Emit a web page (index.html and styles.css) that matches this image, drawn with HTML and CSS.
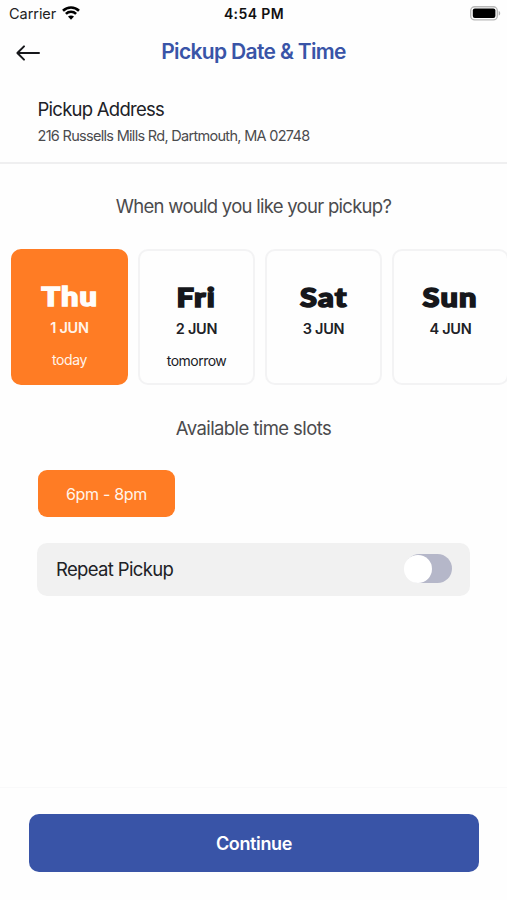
FILE: index.html
```html
<!DOCTYPE html>
<html lang="en">
<head>
<meta charset="utf-8">
<title>Pickup Date &amp; Time</title>
<link rel="stylesheet" href="styles.css">
</head>
<body>
<div class="screen">
  <header class="status">
    <div class="status-left"><span class="carrier">Carrier</span>
      <svg class="wifi" width="18" height="14" viewBox="0 0 18 14" fill="none" stroke="#000" stroke-width="2.6"><path d="M1 4.7C5.5.4 12.5.4 17 4.7M3.9 7.9c2.9-2.8 7.3-2.8 10.2 0"/><path d="M6 10.5c1.7-1.5 4.3-1.5 6 0l-3 3.2z" fill="#000" stroke="none"/></svg>
    </div>
    <span class="clock">4:54 PM</span>
    <svg class="battery" width="31" height="15" viewBox="0 0 31 15"><rect x=".7" y=".7" width="26.6" height="13.2" rx="4" fill="#fff" stroke="#b8b8b8" stroke-width="1.4"/><rect x="2.8" y="2.6" width="22.6" height="9.4" rx="2" fill="#000"/><path d="M28.7 5v4.6c2-.6 2-4 0-4.6z" fill="#b0b0b0"/></svg>
  </header>
  <nav class="nav">
    <svg class="back" width="26" height="18" viewBox="0 0 26 18" fill="none" stroke="#16171b" stroke-width="2" stroke-linecap="round" stroke-linejoin="round"><path d="M24 9H2.8M9 2.4L2.4 9L9 15.6"/></svg>
    <h1 class="title">Pickup Date &amp; Time</h1>
  </nav>
  <section class="address">
    <h2 class="address-label">Pickup Address</h2>
    <p class="address-text">216 Russells Mills Rd, Dartmouth, MA 02748</p>
  </section>
  <main class="content">
    <p class="prompt">When would you like your pickup?</p>
    <div class="days">
      <div class="day selected"><span class="name">Thu</span><span class="date">1 JUN</span><span class="note">today</span></div>
      <div class="day"><span class="name">Fri</span><span class="date">2 JUN</span><span class="note">tomorrow</span></div>
      <div class="day"><span class="name">Sat</span><span class="date">3 JUN</span></div>
      <div class="day"><span class="name">Sun</span><span class="date">4 JUN</span></div>
    </div>
    <p class="prompt slots-title">Available time slots</p>
    <button class="slot">6pm - 8pm</button>
    <div class="repeat"><span class="repeat-label">Repeat Pickup</span><span class="toggle"><span class="knob"></span></span></div>
  </main>
  <footer class="footer"><button class="continue">Continue</button></footer>
</div>
</body>
</html>
```
FILE: styles.css
```css
* { box-sizing: border-box; margin: 0; padding: 0; }
body { background: #fefefe; font-family: Inter, "Liberation Sans", sans-serif; color: #202126; }
button { border: 0; font-family: inherit; }
.screen { width: 507px; height: 900px; overflow: hidden; display: flex; flex-direction: column; background: #fefefe; }
.status { height: 28px; display: grid; grid-template-columns: 1fr auto 1fr; align-items: center; padding: 0 6px 0 9px; }
.status-left { display: flex; align-items: center; gap: 6px; }
.carrier { font-size: 14.5px; letter-spacing: -.05px; color: #222; margin-top: -2px; }
.wifi { margin-top: -2px; }
.clock { font-size: 14px; font-weight: 600; letter-spacing: .4px; color: #111; margin: -2px 2px 0 0; }
.battery { justify-self: end; margin-top: -1px; }
.nav { height: 50px; display: grid; grid-template-columns: 1fr auto 1fr; align-items: center; padding: 0 15px; }
.title { font-size: 21px; line-height: 26px; font-weight: 600; letter-spacing: -.66px; color: #3954a7; margin-top: -3px; }
.address { height: 86px; padding: 19px 37.5px 0; border-bottom: 2px solid #efeff0; }
.address-label { font-size: 18.5px; line-height: 25px; font-weight: 400; letter-spacing: -.74px; }
.address-text { font-size: 14.5px; line-height: 20px; margin-top: 4px; letter-spacing: -.7px; color: #4b4b4e; }
.content { flex: 1; }
.prompt { font-size: 18.5px; line-height: 26px; padding-top: 29px; text-align: center; letter-spacing: -.72px; color: #4b4b4d; }
.days { display: flex; gap: 10px; margin-top: 30px; padding-left: 11px; }
.day { flex: 0 0 117px; height: 136px; border: 2px solid #f3f3f4; border-radius: 10px; background: #fefefe; display: flex; flex-direction: column; align-items: center; padding-top: 27px; }
.name { font-family: Lato, sans-serif; font-weight: 900; font-size: 27px; line-height: 38px; color: #16171b; -webkit-text-stroke: 1.6px currentColor; stroke-linejoin: round; letter-spacing: 1px; transform: scaleX(1.14); }
.date { font-size: 14.5px; line-height: 20px; font-weight: 600; letter-spacing: -.3px; margin-top: 3px; }
.note { font-size: 14px; line-height: 20px; letter-spacing: -.5px; margin-top: 12px; }
.selected { background: #ff7c24; border-color: #ff7c24; padding-top: 26px; }
.selected span { color: #fff4ea; }
.selected .name { color: #fffdfa; }
.selected .note { letter-spacing: -.4px; }
.slots-title { letter-spacing: -.59px; padding-top: 30px; }
.slot { display: block; margin: 29px 0 0 38px; width: 137px; height: 47px; border-radius: 9px; background: #ff7c24; color: #fff4ea; font-size: 16px; letter-spacing: -.3px; }
.repeat { margin: 26px 37px 0 37px; height: 53px; border-radius: 10px; background: #f1f1f1; display: flex; justify-content: space-between; align-items: center; padding: 0 18px 2px 19px; }
.repeat-label { font-size: 18.5px; letter-spacing: -.65px; }
.toggle { width: 47px; height: 29px; border-radius: 15px; background: #b5b7c9; display: flex; align-items: center; }
.knob { width: 28px; height: 28px; margin-left: -1px; border-radius: 50%; background: #fff; }
.footer { height: 113px; border-top: 1px solid #f9f9fa; padding: 26px 28px 0 29px; }
.continue { display: block; width: 100%; height: 58px; border-radius: 10px; background: #3954a7; color: #fff; font-size: 18px; font-weight: 600; letter-spacing: -.35px; }
```
